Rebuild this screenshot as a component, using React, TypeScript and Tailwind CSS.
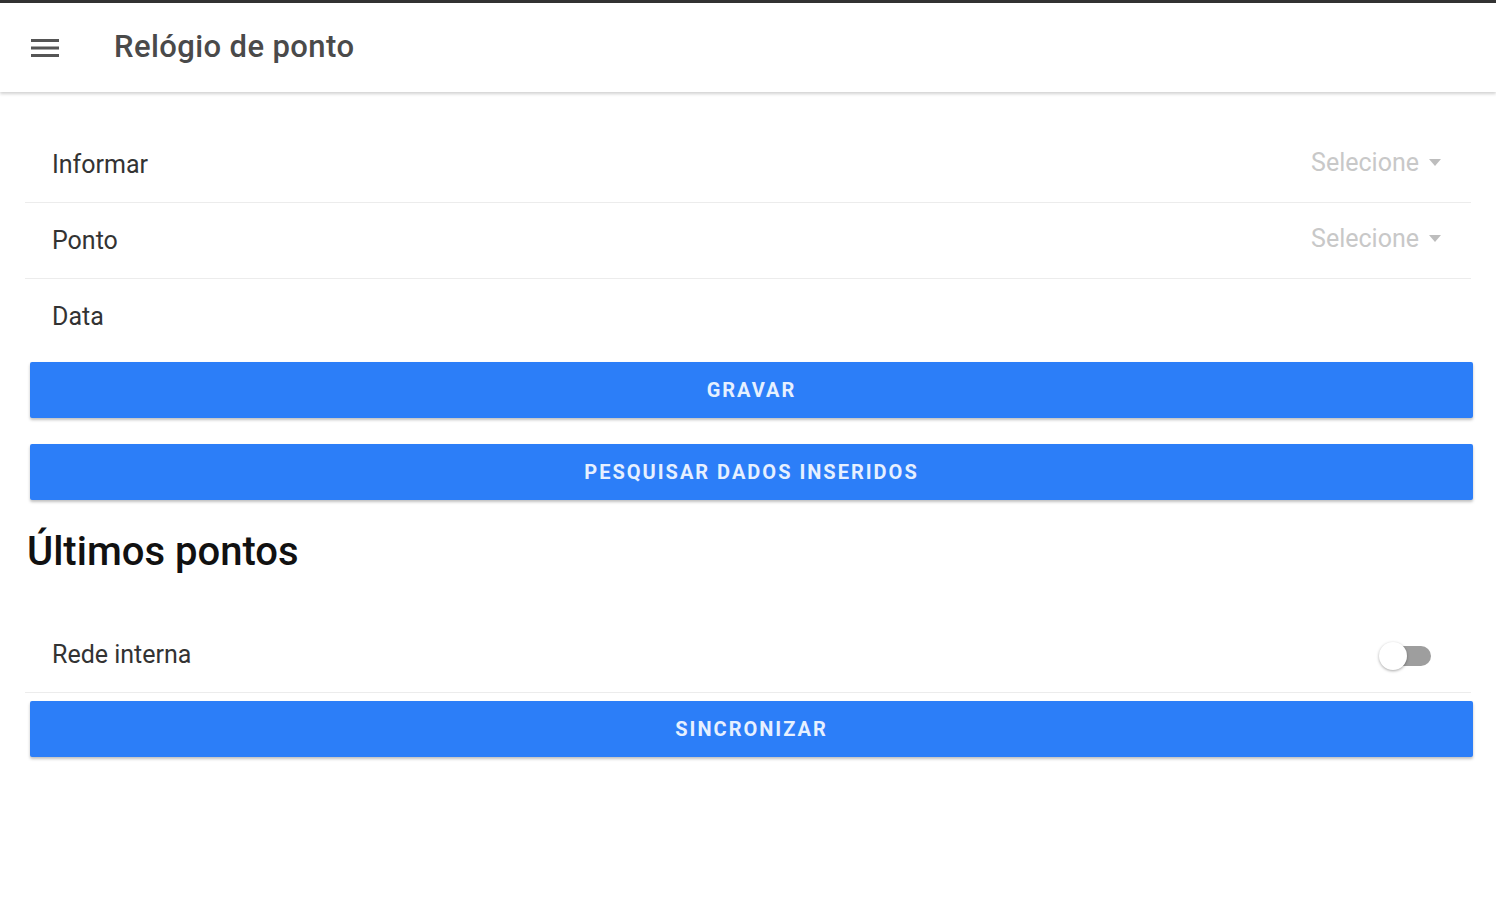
import React from 'react';

const Row = ({ label, value, last }: { label: string; value?: string; last?: boolean }) => (
  <div className={`flex h-[76px] items-center justify-between pl-[27px] pr-[30px] ${last ? '' : 'border-b border-[#ececec]'}`}>
    <span className="text-[25px] text-[#333]">{label}</span>
    {value && (
      <span className="flex items-center gap-[10px] pb-[4px] text-[25px] text-[#c8c8c8]">
        {value}
        <svg width="12" height="7" viewBox="0 0 12 7">
          <path d="M0 0h12L6 7z" fill="#bdbdbd" />
        </svg>
      </span>
    )}
  </div>
);

const BlueButton = ({ children }: { children: React.ReactNode }) => (
  <button className="ml-[5px] flex h-[56px] w-[1443px] items-center justify-center rounded-[2px] bg-[#2c7ef8] text-[20px] font-bold tracking-[2px] text-[#e6f0ff] shadow-[0_2px_3px_rgba(0,0,0,0.25)]">
    {children}
  </button>
);

export default function App() {
  return (
    <div className="min-h-[900px] bg-white font-['Roboto',sans-serif]">
      <div className="h-[3px] bg-[#333]" />

      {/* Header */}
      <header className="flex h-[89px] items-center shadow-[0_2px_3px_rgba(0,0,0,0.18)]">
        <svg className="ml-[30px]" width="30" height="20" viewBox="0 0 30 20">
          <rect x="1" y="1" width="28" height="3" fill="#555" />
          <rect x="1" y="8.5" width="28" height="3" fill="#555" />
          <rect x="1" y="16" width="28" height="3" fill="#555" />
        </svg>
        <h1 className="ml-[54px] text-[31px] font-medium tracking-[0.4px] text-[#4a4a4a]">Relógio de ponto</h1>
      </header>

      <main className="px-[25px] pt-[35px]">
        <Row label="Informar" value="Selecione" />
        <Row label="Ponto" value="Selecione" />
        <Row label="Data" last />

        <div className="mt-[7px] flex flex-col gap-[26px]">
          <BlueButton>GRAVAR</BlueButton>
          <BlueButton>PESQUISAR DADOS INSERIDOS</BlueButton>
        </div>

        <h2 className="ml-[2px] mt-[24px] text-[40px] font-medium leading-[56px] text-[#111]">Últimos pontos</h2>

        <div className="mt-[37px] flex h-[76px] items-center justify-between border-b border-[#ececec] pl-[27px] pr-[40px]">
          <span className="text-[25px] text-[#333]">Rede interna</span>
          <div className="relative h-[22px] w-[52px]">
            <div className="absolute right-0 top-[2px] h-[20px] w-[40px] rounded-full bg-[#9e9e9e]" />
            <div className="absolute left-0 top-[-2px] h-[28px] w-[28px] rounded-full bg-white shadow-[0_1px_3px_rgba(0,0,0,0.35)]" />
          </div>
        </div>

        <div className="mt-[8px]">
          <BlueButton>SINCRONIZAR</BlueButton>
        </div>
      </main>
    </div>
  );
}
